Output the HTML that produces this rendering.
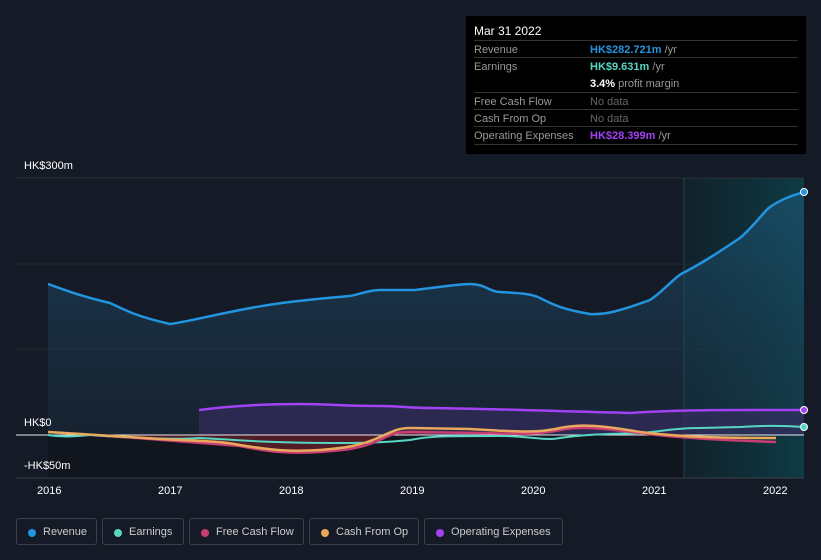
<!DOCTYPE html>
<html><head><meta charset="utf-8"><style>
body{margin:0;width:821px;height:560px;background:#151b26;font-family:"Liberation Sans",sans-serif;overflow:hidden;position:relative}
.tt{position:absolute;left:466px;top:16px;width:340px;height:138px;background:#000;color:#fff;font-size:11px}
.tt .h{position:absolute;left:8px;top:8px;font-size:12px}
.row{position:absolute;left:8px;width:324px;border-top:1px solid #333;height:17px;line-height:17px}
.row .l{position:absolute;left:0;color:#999;top:1px}
.row .v{position:absolute;left:116px;color:#999;top:1px}
.leg{position:absolute;top:518px;height:27px;border:1px solid #3a404b;border-radius:3px;color:#ccc;font-size:11px;line-height:27px;box-sizing:border-box;padding-left:26px}
.leg i{position:absolute;left:11px;top:10px;width:8px;height:8px;border-radius:50%}
.ax{position:absolute;color:#fff;font-size:11px}
</style></head><body>
<svg width="821" height="560" style="position:absolute;left:0;top:0">
<defs>
<linearGradient id="rg" x1="0" y1="0" x2="0" y2="1"><stop offset="0" stop-color="#1e5a80" stop-opacity=".55"/><stop offset="1" stop-color="#1e3a50" stop-opacity=".25"/></linearGradient>
<linearGradient id="hg" x1="0" y1="0" x2="1" y2="0"><stop offset="0" stop-color="#0c2a33" stop-opacity=".5"/><stop offset="1" stop-color="#0e3f48" stop-opacity=".9"/></linearGradient>
</defs>
<rect x="48" y="435" width="636" height="43" fill="#11151d"/>
<rect x="684" y="178" width="120" height="300" fill="url(#hg)"/>
<line x1="684" y1="178" x2="684" y2="478" stroke="#2a4048"/>
<line x1="16" y1="178" x2="804" y2="178" stroke="#2a303a"/>
<line x1="16" y1="264" x2="804" y2="264" stroke="#222833"/>
<line x1="16" y1="349" x2="804" y2="349" stroke="#222833"/>
<path d="M48,284 C65,290 80,296 110,303 C125,310 135,316 170,324 C185,322 200,318 240,310 C265,305 290,301 350,296 C360,294 370,290 380,290 L415,290 C440,287 460,284 470,284 C485,284 490,292 500,292 C515,293 530,293 540,298 C550,303 560,309 590,314 C605,315 620,311 650,300 C665,290 675,276 685,272 C700,264 710,258 740,238 C755,225 765,210 770,207 C785,197 795,195 804,192 L804,435 L48,435 Z" fill="url(#rg)"/>
<path d="M199,410 C230,406 260,404 300,404 C330,404 340,406 380,406 C400,406 410,408 430,408 C500,409 550,411 630,413 C660,411 700,410 740,410 L804,410 L804,435 L199,435 Z" fill="#3a2d66" opacity=".6"/>
<path d="M110,436 C160,440 200,443 240,446 C270,452 290,454 320,452 C345,450 360,449 380,440 C395,432 400,431 410,430 L430,430 L430,435 L110,435 Z" fill="#6b1f2e" opacity=".7"/>
<line x1="16" y1="435" x2="804" y2="435" stroke="#e8e8e8" stroke-width="1"/>
<line x1="16" y1="478" x2="804" y2="478" stroke="#3a404b"/>
<path d="M48,284 C65,290 80,296 110,303 C125,310 135,316 170,324 C185,322 200,318 240,310 C265,305 290,301 350,296 C360,294 370,290 380,290 L415,290 C440,287 460,284 470,284 C485,284 490,292 500,292 C515,293 530,293 540,298 C550,303 560,309 590,314 C605,315 620,311 650,300 C665,290 675,276 685,272 C700,264 710,258 740,238 C755,225 765,210 770,207 C785,197 795,195 804,192" fill="none" stroke="#2394df" stroke-width="2.5"/>
<path d="M199,410 C230,406 260,404 300,404 C330,404 340,406 380,406 C400,406 410,408 430,408 C500,409 550,411 630,413 C660,411 700,410 740,410 L804,410" fill="none" stroke="#a142f4" stroke-width="2.5"/>
<path d="M48,435 C60,437 70,437 90,435 C130,438 170,440 200,438 C250,441 280,443 330,443 C360,443 380,443 410,440 C430,436 440,436 500,436 C530,436 545,441 560,438 C580,435 600,434 640,433 C660,432 670,428 700,428 L740,427 C770,425 790,426 804,427" fill="none" stroke="#58d6c4" stroke-width="2"/>
<path d="M110,436 C160,440 200,443 240,446 C270,452 290,454 320,452 C345,450 360,449 380,440 C395,432 400,432 410,432 L480,433 C520,434 535,435 560,430 C580,426 600,428 640,433 C680,438 720,440 776,442" fill="none" stroke="#c83e74" stroke-width="2.5"/>
<path d="M48,432 C80,434 100,435 160,439 C200,441 220,441 240,445 C270,450 290,452 320,450 C345,448 360,446 380,437 C395,430 400,428 410,428 L470,429 C510,431 535,434 560,428 C580,424 600,425 640,432 C680,437 720,438 776,438" fill="none" stroke="#e8a95c" stroke-width="2.5"/>
<circle cx="804" cy="192" r="3.5" fill="#2394df" stroke="#fff" stroke-width="1"/>
<circle cx="804" cy="410" r="3.5" fill="#a142f4" stroke="#fff" stroke-width="1"/>
<circle cx="804" cy="427" r="3.5" fill="#58d6c4" stroke="#fff" stroke-width="1"/>
</svg>
<div class="ax" style="left:24px;top:160px">HK$300m</div>
<div class="ax" style="left:24px;top:417px">HK$0</div>
<div class="ax" style="left:24px;top:460px">-HK$50m</div>
<div class="ax" style="left:37px;top:485px">2016</div>
<div class="ax" style="left:158px;top:485px">2017</div>
<div class="ax" style="left:279px;top:485px">2018</div>
<div class="ax" style="left:400px;top:485px">2019</div>
<div class="ax" style="left:521px;top:485px">2020</div>
<div class="ax" style="left:642px;top:485px">2021</div>
<div class="ax" style="left:763px;top:485px">2022</div>
<div class="tt"><div class="h">Mar 31 2022</div>
<div class="row" style="top:24px;height:17px"><span class="l">Revenue</span><span class="v"><b style="color:#2394df">HK$282.721m</b> /yr</span></div>
<div class="row" style="top:41px;height:35px"><span class="l">Earnings</span><span class="v"><b style="color:#58d6c4">HK$9.631m</b> /yr<br><b style="color:#fff">3.4%</b> profit margin</span></div>
<div class="row" style="top:76px;height:17px"><span class="l">Free Cash Flow</span><span class="v" style="color:#666">No data</span></div>
<div class="row" style="top:93px;height:17px"><span class="l">Cash From Op</span><span class="v" style="color:#666">No data</span></div>
<div class="row" style="top:110px;height:17px;border-bottom:1px solid #333"><span class="l">Operating Expenses</span><span class="v"><b style="color:#a142f4">HK$28.399m</b> /yr</span></div>
</div>
<div class="leg" style="left:16px;width:81px"><i style="background:#2394df"></i>Revenue</div>
<div class="leg" style="left:102px;width:82px"><i style="background:#58d6c4"></i>Earnings</div>
<div class="leg" style="left:189px;width:115px"><i style="background:#c83e74"></i>Free Cash Flow</div>
<div class="leg" style="left:309px;width:110px"><i style="background:#e8a95c"></i>Cash From Op</div>
<div class="leg" style="left:424px;width:139px"><i style="background:#a142f4"></i>Operating Expenses</div>
</body></html>
